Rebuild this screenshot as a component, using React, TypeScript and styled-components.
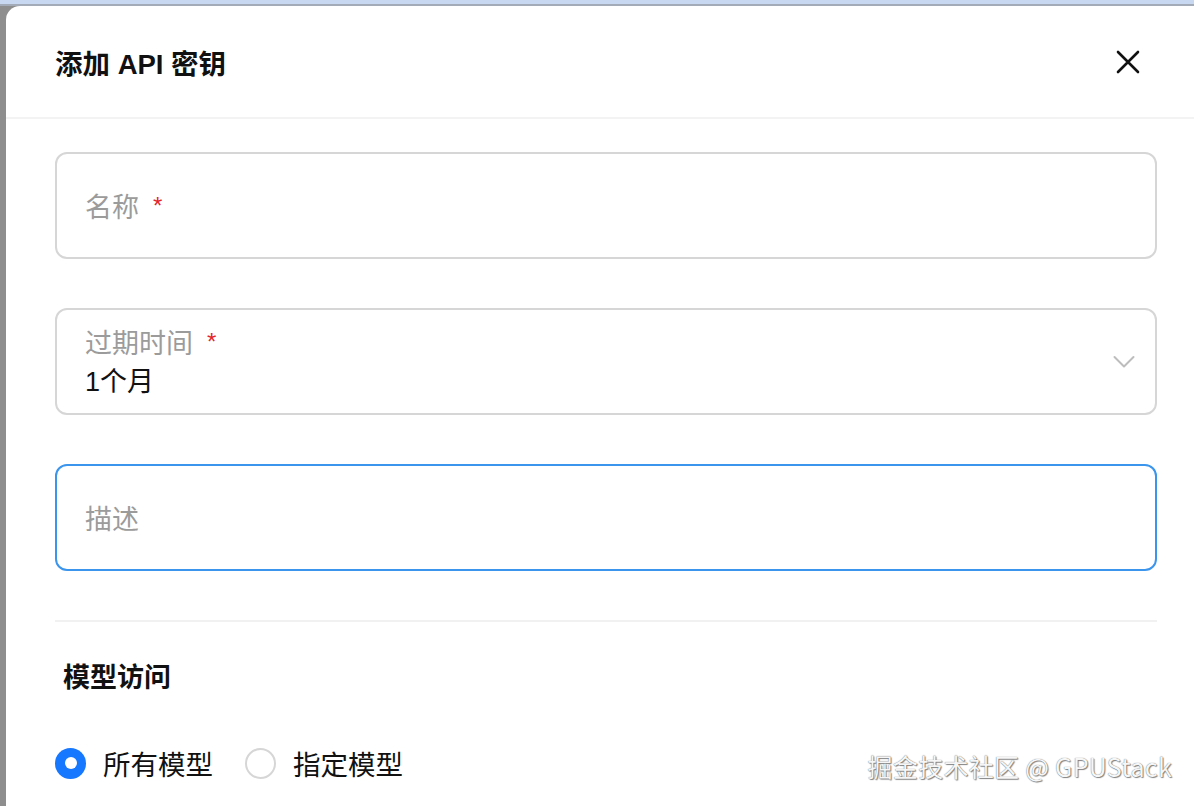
import React from "react";
import styled, { createGlobalStyle } from "styled-components";

const GlobalStyle = createGlobalStyle`
  html, body { margin: 0; padding: 0; }
  body {
    font-family: "Liberation Sans", "Noto Sans CJK SC", sans-serif;
    background: #8e8e8e;
    overflow: hidden;
  }
  * { box-sizing: border-box; }
`;

const Page = styled.div`
  position: relative;
  width: 1194px;
  height: 806px;
  display: flex;
  flex-direction: column;
  background: #8e8e8e;
`;

const TopBand = styled.div`
  height: 6px;
  flex: none;
  background: #c8d8f0;
  border-bottom: 2px solid #a3aab8;
`;

const Body = styled.div`
  flex: 1;
  display: flex;
  padding-left: 6px;
  min-height: 0;
`;

const Modal = styled.div`
  flex: 1;
  background: #ffffff;
  border-top-left-radius: 14px;
  display: flex;
  flex-direction: column;
  overflow: hidden;
`;

const Header = styled.div`
  height: 113px;
  flex: none;
  display: flex;
  align-items: center;
  justify-content: space-between;
  padding: 0 48px 0 49px;
  border-bottom: 2px solid #f3f3f3;
`;

const Title = styled.h1`
  margin: 0;
  font-size: 27.5px;
  font-weight: 700;
  color: #111;
`;

const CloseButton = styled.button`
  width: 36px;
  height: 36px;
  border: none;
  background: none;
  padding: 0;
  display: flex;
  align-items: center;
  justify-content: center;
  cursor: pointer;
`;

const Content = styled.div`
  display: flex;
  flex-direction: column;
  padding: 33px 37px 0 49px;
`;

const Fields = styled.div`
  display: flex;
  flex-direction: column;
  gap: 49px;
`;

const FieldBox = styled.div<{ $focused?: boolean }>`
  height: 107px;
  border: 2px solid ${(p) => (p.$focused ? "#3b95ec" : "#d6d6d6")};
  border-radius: 12px;
  display: flex;
  align-items: center;
  padding: 0 20px 0 28px;
  background: #fff;
`;

const FieldStack = styled.div`
  flex: 1;
  display: flex;
  flex-direction: column;
  justify-content: center;
  gap: 4px;
`;

const Label = styled.span`
  font-family: "Noto Sans CJK SC", sans-serif;
  font-size: 27px;
  line-height: 36px;
  color: #9b9b9b;
  display: inline-flex;
  align-items: center;
`;

const Required = styled.span`
  color: #e5252a;
  font-size: 24px;
  margin-left: 14px;
  font-family: "Liberation Sans", sans-serif;
`;

const Value = styled.span`
  font-family: "Liberation Sans", "Noto Sans CJK SC", sans-serif;
  font-size: 27px;
  line-height: 36px;
  color: #111;
`;

const Divider = styled.div`
  height: 2px;
  background: #f1f1f1;
  margin-top: 49px;
`;

const SectionTitle = styled.h2`
  margin: 36px 0 0 8px;
  font-family: "Noto Sans CJK SC", sans-serif;
  font-size: 27px;
  line-height: 36px;
  font-weight: 700;
  color: #111;
`;

const RadioGroup = styled.div`
  display: flex;
  align-items: center;
  gap: 32px;
  margin-top: 51px;
`;

const RadioItem = styled.label`
  display: flex;
  align-items: center;
  gap: 17px;
  font-family: "Noto Sans CJK SC", sans-serif;
  font-size: 27.5px;
  line-height: 36px;
  color: #111;
`;

const RadioCircle = styled.span<{ $checked?: boolean }>`
  width: 31px;
  height: 31px;
  border-radius: 50%;
  flex: none;
  background: ${(p) => (p.$checked ? "#1677ff" : "#fff")};
  border: ${(p) => (p.$checked ? "none" : "2px solid #d6d6d6")};
  display: flex;
  align-items: center;
  justify-content: center;
  &::after {
    content: "";
    display: ${(p) => (p.$checked ? "block" : "none")};
    width: 12px;
    height: 12px;
    border-radius: 50%;
    background: #fff;
  }
`;

const Watermark = styled.div`
  position: absolute;
  right: 22px;
  bottom: 24px;
  font-family: "Noto Sans CJK SC", sans-serif;
  font-size: 25px;
  line-height: 32px;
  color: #f6f6f6;
  text-shadow: 0 0 1px #555, 1px 1px 1px #888;
  letter-spacing: 0.3px;
`;

const CloseIcon = () => (
  <svg width="24" height="24" viewBox="0 0 24 24" fill="none">
    <path d="M2 2L22 22M22 2L2 22" stroke="#111" strokeWidth="2.6" strokeLinecap="round" />
  </svg>
);

const Chevron = () => (
  <svg width="22" height="14" viewBox="0 0 22 14" fill="none">
    <path d="M1.5 2L11 11.5L20.5 2" stroke="#bdbdbd" strokeWidth="2" strokeLinecap="round" strokeLinejoin="round" />
  </svg>
);

export default function App() {
  return (
    <>
      <GlobalStyle />
      <Page>
        <TopBand />
        <Body>
          <Modal>
            <Header>
              <Title>添加 API 密钥</Title>
              <CloseButton aria-label="close">
                <CloseIcon />
              </CloseButton>
            </Header>
            <Content>
              <Fields>
                <FieldBox>
                  <Label>
                    名称<Required>*</Required>
                  </Label>
                </FieldBox>
                <FieldBox>
                  <FieldStack>
                    <Label>
                      过期时间<Required>*</Required>
                    </Label>
                    <Value>1个月</Value>
                  </FieldStack>
                  <Chevron />
                </FieldBox>
                <FieldBox $focused>
                  <Label>描述</Label>
                </FieldBox>
              </Fields>
              <Divider />
              <SectionTitle>模型访问</SectionTitle>
              <RadioGroup>
                <RadioItem>
                  <RadioCircle $checked />
                  所有模型
                </RadioItem>
                <RadioItem>
                  <RadioCircle />
                  指定模型
                </RadioItem>
              </RadioGroup>
            </Content>
          </Modal>
        </Body>
        <Watermark>掘金技术社区 @ GPUStack</Watermark>
      </Page>
    </>
  );
}
